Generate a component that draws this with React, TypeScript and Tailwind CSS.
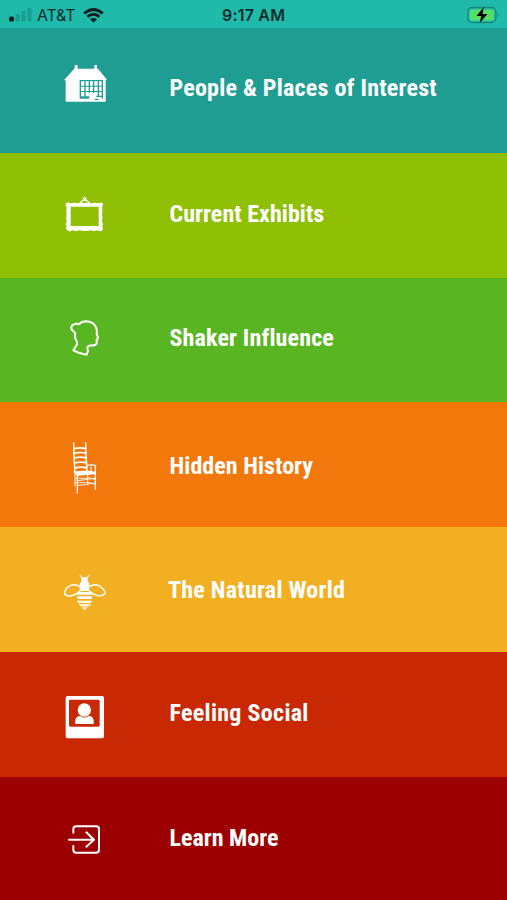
import { ReactNode } from "react";
import clsx from "clsx";

interface MenuItem {
  label: string;
  row: string;
  iconOffset: string;
  text: string;
  icon: ReactNode;
}

const HouseIcon = () => (
  <>
    <path
      fill="white"
      d="M59 30h9v11h50V30h8v11h3l27 33h-4v66H32V76h-5l32-36z"
    />
    <g fill="#209d92">
      <path d="M74 75h70v56h-4V79H78v48h24v4H74z" />
      <path d="M88 79h4v46h-4zM101 79h4v35h-4zM114 79h4v35h-4zM128 79h4v46h-4z" />
      <path d="M78 92h64v3H78zM78 108h64v3H78zM78 124h25v4H78zM119 131h11v4h-11zM124 122h18v4h-18z" />
    </g>
  </>
);

const FrameIcon = () => (
  <g fill="none" stroke="white">
    <path strokeWidth="4" strokeLinejoin="round" d="M72 56l13-11h8l13 11" />
    <circle cx="89" cy="41" r="4" strokeWidth="3.500" />
    <path
      fill="white"
      stroke="none"
      d="M34 54q6-4 12 1 12-3 24 0 18-3 38 0 12-3 23 0 7-5 12 0 4 7-2 12 3 12 0 22 3 10 0 20 5 8 1 14 4 9-1 14-7 4-14-1-10 4-19 0-17 4-34 0-12 4-20 0-8 5-15 1-9-4-4-13-5-8 0-15-3-10 0-20-3-11 0-22-6-7-1-13zM47 65v58h84V65z"
      fillRule="evenodd"
    />
  </g>
);

const SilhouetteIcon = () => (
  <path
    fill="none"
    stroke="white"
    strokeWidth="6"
    strokeLinejoin="round"
    d="M61 70q-5-6-10-10-6-8 2-15 9-6 18-2 9-9 24-9 17 1 26 14 6 9 4 24l4 10q1 4-4 6v12q-2 7-11 6l-12 1q-5 2-5 8l2 9q-3 4-4 10-20-2-40-13 6-9 11-18 2-5-2-12-7-10-3-21z"
  />
);

const ChairIcon = () => (
  <g fill="none" stroke="white" strokeLinecap="round">
    <path strokeWidth="4.500" d="M56 15l1 40 3 48M92 15l1 40 3 45" />
    <path strokeWidth="5" d="M57 32q18-5 35 0M57 46q18-5 36 0M58 60q18-5 36 0M59 75q18-5 36 0M60 90q18-5 35 0" />
    <path strokeWidth="4" d="M97 83q12-5 25 0" />
    <path fill="white" strokeWidth="3" d="M57 102l40-3 24 4-1 4-51 5z" />
    <path strokeWidth="4" d="M67 111v54M121 83v71" />
    <path strokeWidth="3" d="M60 107v37M98 107v34M108 87v14" />
    <path strokeWidth="2.500" d="M60 121h37M60 134h37M68 128l52-7M68 143l52-8M100 119l20 5M100 133l20 6" />
  </g>
);

const BeeIcon = () => (
  <>
    <g fill="none" stroke="white">
      <path strokeWidth="4.500" d="M73 73Q60 65 47 70q-19 9-18 26 6 8 20 5 17-3 28-16M105 73q12-8 25-3 18 9 20 23-5 10-21 8-17-3-28-16" />
      <path strokeWidth="3.500" d="M82 49l-7-10M95 49l8-10" />
    </g>
    <g fill="white">
      <path d="M81 46h15l3 13q5 5 5 14-1 10-4 14H77q-5-7-4-15 1-8 5-13z" />
      <path d="M65 90h47l-2 8H68zM65 103h47l-3 8H68zM66 116h45l-4 7H70zM71 127h36l-5 6H77zM80 136h18l-9 8z" />
    </g>
  </>
);

const PortraitIcon = () => (
  <>
    <path
      fill="white"
      fillRule="evenodd"
      d="M38 27h103q6 0 6 6v115q0 6-6 6H38q-6 0-6-6V33q0-6 6-6zM46 38q-4 0-4 4v73q0 4 4 4h84q4 0 4-4V42q0-4-4-4z"
    />
    <circle cx="88" cy="69" r="20" fill="white" />
    <path fill="white" d="M61 111V99q3-13 15-12 12 9 25 0 13 0 15 13v11z" />
  </>
);

const EnterIcon = () => (
  <g fill="none" stroke="white" strokeWidth="6" strokeLinecap="round" strokeLinejoin="round">
    <path d="M55 68V57q0-8 9-8h59q9 0 9 8v62q0 9-9 9H64q-9 0-9-9v-11" />
    <path d="M42 89h74M94 67l23 22-23 21" />
  </g>
);

const items: MenuItem[] = [
  { label: "People & Places of Interest", row: "h-[125px] bg-[#209d92]", iconOffset: "mt-[27px]", text: "mt-[46px] ml-[54.5px] tracking-[0.23px]", icon: <HouseIcon /> },
  { label: "Current Exhibits", row: "h-[125px] bg-[#8fc005]", iconOffset: "mt-8", text: "mt-[47px] ml-[54.5px] tracking-[0.05px]", icon: <FrameIcon /> },
  { label: "Shaker Influence", row: "h-[124px] bg-[#5ab522]", iconOffset: "mt-8", text: "mt-[46px] ml-[54.5px] tracking-[0.15px]", icon: <SilhouetteIcon /> },
  { label: "Hidden History", row: "h-[125px] bg-[#f2780c]", iconOffset: "mt-9", text: "mt-[50px] ml-[54.5px] tracking-[0.05px]", icon: <ChairIcon /> },
  { label: "The Natural World", row: "h-[125px] bg-[#f3af22]", iconOffset: "mt-[35px]", text: "mt-[49px] ml-[53px] tracking-[0.25px]", icon: <BeeIcon /> },
  { label: "Feeling Social", row: "h-[125px] bg-[#c82804]", iconOffset: "mt-[35px]", text: "mt-[47px] ml-[54.5px] tracking-[0.3px]", icon: <PortraitIcon /> },
  { label: "Learn More", row: "h-[123px] bg-[#9d0000]", iconOffset: "mt-[33px]", text: "mt-[47px] ml-[54.5px] tracking-[0px]", icon: <EnterIcon /> }
];

const StatusBar = () => (
  <header className="relative flex h-7 items-center bg-[#20baaa] pt-0.5 pl-[9px] pr-[7px] font-['Inter','Liberation_Sans',sans-serif] text-[#072d2a]">
    <svg width="23" height="14" viewBox="0 0 23 14">
      <rect x="0" y="8.500" width="5" height="5" rx="1.500" fill="#06201e" />
      <g fill="#199e91">
        <rect x="6.500" y="6" width="4" height="7.500" rx="1" />
        <rect x="12.500" y="3" width="4" height="10.500" rx="1" />
        <rect x="18.500" y="0" width="4" height="13.500" rx="1" />
      </g>
    </svg>
    <span className="ml-[5px] w-10 whitespace-nowrap text-base tracking-[-0.2px]">AT&amp;T</span>
    <svg className="ml-1.5" width="21" height="15" viewBox="0 0 21 15" fill="none" stroke="#06201e" strokeWidth="2.800">
      <path d="M1.200 5.400q9.300-7.800 18.600 0M4.500 8.800q6-5 12 0" />
      <path fill="#06201e" stroke="none" d="M7 11.200q3.500-2.600 7 0L10.500 14.600z" />
    </svg>
    <span className="absolute left-[222px] whitespace-nowrap text-base font-semibold tracking-[0.2px]">9:17 AM</span>
    <svg className="ml-auto" width="33" height="18" viewBox="0 0 33 18">
      <rect x="0.800" y="1.500" width="28" height="15" rx="4" fill="none" stroke="#168a7f" strokeWidth="1.300" />
      <rect x="2.800" y="3.500" width="24" height="11" rx="2.500" fill="#55df68" />
      <path d="M30.500 6.500q2 2.500 0 5z" fill="#168a7f" />
      <path d="M16.800 1L9.500 10h4.700l-1.500 7 7.800-9h-5z" fill="black" />
    </svg>
  </header>
);

export default function App() {
  return (
    <div className="flex h-[900px] w-[507px] flex-col overflow-hidden">
      <StatusBar />
      <nav>
        {items.map((item) => (
          <a key={item.label} className={clsx("flex items-start pl-[55px]", item.row)}>
            <svg className={clsx("shrink-0", item.iconOffset)} width="60" height="60" viewBox="0 0 180 180">
              {item.icon}
            </svg>
            <span
              className={clsx(
                "whitespace-nowrap font-['Roboto_Condensed','Liberation_Sans_Narrow','Roboto',sans-serif] text-2xl leading-7 font-bold text-white",
                item.text
              )}
            >
              {item.label}
            </span>
          </a>
        ))}
      </nav>
    </div>
  );
}
